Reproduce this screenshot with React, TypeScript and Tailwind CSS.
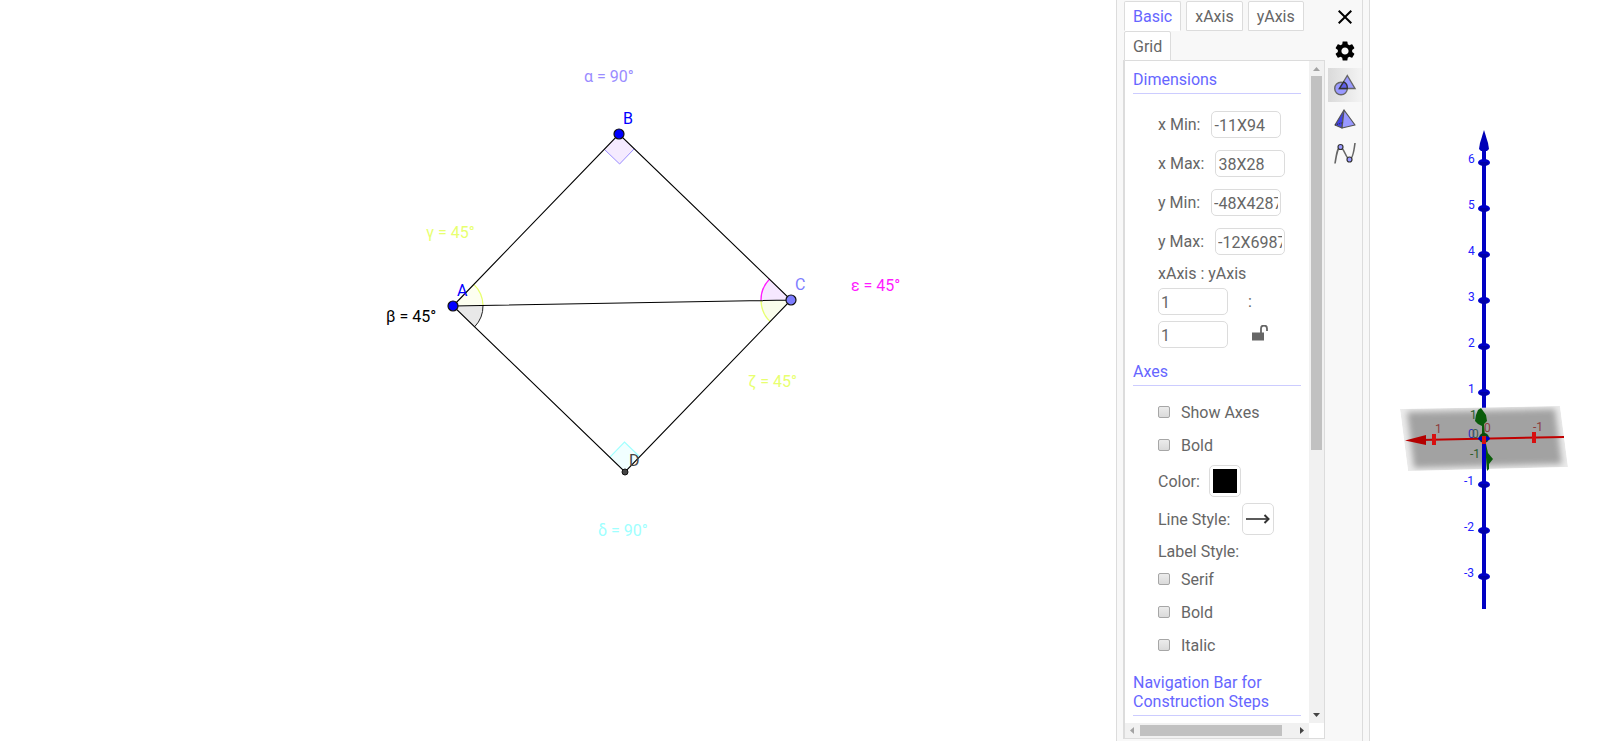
import React, { useState } from "react";
import { MdClose, MdSettings } from "react-icons/md";

const tabs = ["Basic", "xAxis", "yAxis", "Grid"];

const dimensions = [
  { id: "xmin", label: "x Min:", value: "-11X94" },
  { id: "xmax", label: "x Max:", value: "38X28" },
  { id: "ymin", label: "y Min:", value: "-48X4287" },
  { id: "ymax", label: "y Max:", value: "-12X6987" },
];

const inputClass =
  "h-[27px] w-[70px] rounded-[5px] border border-[#dcdcdc] bg-white px-0.5 pt-0.5 text-[#666] outline-none";

function Geometry() {
  return (
    <svg
      viewBox="0 0 1116 741"
      preserveAspectRatio="xMidYMin meet"
      className="block h-full w-full"
      fontSize="16"
      role="img"
      aria-label="Graphics"
    >
      <path d="M453 306 L483 305.5 A30 30 0 0 0 473.8 284.4 Z" fill="#fdfff0" />
      <path d="M483 305.5 A30 30 0 0 0 473.8 284.4" fill="none" stroke="#e8ff70" strokeWidth="1.3" />
      <path d="M453 306 L483 305.5 A30 30 0 0 1 474.6 326.8 Z" fill="#e8e8e8" />
      <path d="M483 305.5 A30 30 0 0 1 474.6 326.8" fill="none" stroke="#222" strokeWidth="1" />
      <path d="M791 300 L761 300.5 A30 30 0 0 1 769.4 279.2 Z" fill="#f6e8ff" />
      <path d="M761 300.5 A30 30 0 0 1 769.4 279.2" fill="none" stroke="#ff1aff" strokeWidth="1.3" />
      <path d="M791 300 L761 300.5 A30 30 0 0 0 770.2 321.6 Z" fill="#fafdec" />
      <path d="M761 300.5 A30 30 0 0 0 770.2 321.6" fill="none" stroke="#e8ff70" strokeWidth="1.3" />
      <path d="M619 134 L604.3 149.3 L619.6 164 L634.3 148.7 Z" fill="#f5ebff" />
      <path d="M604.3 149.3 L619.6 164 L634.3 148.7" fill="none" stroke="#9a8cff" />
      <path d="M625 472 L609.7 457.3 L624.5 442 L639.7 456.7 Z" fill="#f1ffff" />
      <path d="M609.7 457.3 L624.5 442 L639.7 456.7" fill="none" stroke="#a0ffff" strokeWidth="1.2" />

      <path d="M453 306 L619 134 L791 300 L625 472 Z M453 306 L791 300" fill="none" stroke="#000" strokeWidth="1.1" />

      <circle cx="453" cy="306" r="5" fill="#00f" stroke="#111" strokeWidth="1.2" />
      <circle cx="619" cy="134" r="5" fill="#00f" stroke="#111" strokeWidth="1.2" />
      <circle cx="791" cy="300" r="5" fill="#7d7dff" stroke="#111" strokeWidth="1.2" />
      <circle cx="625" cy="472" r="3" fill="#444" stroke="#111" />

      <text x="457" y="296" fill="#00f">A</text>
      <text x="623" y="124" fill="#00f">B</text>
      <text x="795" y="290" fill="#7d7dff">C</text>
      <text x="629" y="466" fill="#444">D</text>
      <text x="584" y="82" fill="#9a8cff">α = 90°</text>
      <text x="386" y="322" fill="#000">β = 45°</text>
      <text x="426" y="238" fill="#e8ff70">γ = 45°</text>
      <text x="851" y="291" fill="#ff1aff">ε = 45°</text>
      <text x="748" y="387" fill="#e8ff70">ζ = 45°</text>
      <text x="598" y="536" fill="#a0ffff">δ = 90°</text>
    </svg>
  );
}

const upper = [
  { y: 162, n: "6" },
  { y: 208, n: "5" },
  { y: 254, n: "4" },
  { y: 300, n: "3" },
  { y: 346, n: "2" },
  { y: 392, n: "1" },
];
const lower = [
  { y: 484, n: "-1" },
  { y: 530, n: "-2" },
  { y: 576, n: "-3" },
];

function Graphics3D() {
  return (
    <svg
      viewBox="0 0 230 741"
      preserveAspectRatio="xMidYMin meet"
      className="block h-full w-full"
      fontSize="12"
      role="img"
      aria-label="3D graphics"
    >
      <defs>
        <filter id="soft" x="-10%" y="-20%" width="120%" height="140%">
          <feGaussianBlur stdDeviation="3" />
        </filter>
        <clipPath id="plane">
          <path d="M30 409 L190 406 L198 467 L38 471 Z" />
        </clipPath>
      </defs>
      <path d="M114 148 V408" stroke="#0000c4" strokeWidth="4" />
      <path d="M114 130 L118 143 L119 149 L117 151 H111 L109 149 L110 143 Z" fill="#0000b8" />
      {upper.map((t) => (
        <g key={t.n}>
          <ellipse cx="114" cy={t.y + 0.5} rx="6" ry="3.6" fill="#0000c8" />
          <path d={`M110 ${t.y} h8 v2 l-3 2 h-2 l-3 -2 Z`} fill="#0000a8" />
          <text x="98" y={t.y + 1} fill="#2020ff">{t.n}</text>
        </g>
      ))}

      <g clipPath="url(#plane)">
        <path d="M30 409 L190 406 L198 467 L38 471 Z" fill="#ececec" />
        <path d="M37 412 L185 409 L192 464 L44 468 Z" fill="#a2a2a2" filter="url(#soft)" />
      </g>

      <path d="M115 444 L117 471 L119 469 L119 464 L123 459 L118 453 L116 444 Z" fill="#0a5c0a" />
      <path d="M114 444 V609" stroke="#0000c4" strokeWidth="4" />
      {lower.map((t) => (
        <g key={t.n}>
          <ellipse cx="114" cy={t.y + 0.5} rx="6" ry="3.6" fill="#0000c8" />
          <path d={`M110 ${t.y} h8 v2 l-3 2 h-2 l-3 -2 Z`} fill="#0000a8" />
          <text x="94" y={t.y + 1} fill="#2020ff">{t.n}</text>
        </g>
      ))}

      <path d="M111 408 L108 410 L106 415 L105 421 L108 424 L112 426 L112 436 H115 L114 424 L117 421 L116 415 Z" fill="#0a5c0a" />
      <path d="M50 440 L194 437" stroke="#c00000" strokeWidth="2" />
      <path d="M35 440.5 L56 435 V445 Z" fill="#b40000" />
      <rect x="62" y="434" width="4" height="11" fill="#d81010" />
      <rect x="162" y="432" width="4" height="11" fill="#d81010" />
      <circle cx="114" cy="438" r="5" fill="#0a4c0a" />
      <ellipse cx="114" cy="438.500" rx="6" ry="2.500" fill="#0000c8" />
      <rect x="112" y="436" width="4" height="8" fill="#d81010" />

      <text x="65" y="433" fill="#8c3c3c">1</text>
      <text x="163" y="431" fill="#8c3c3c">-1</text>
      <text x="114" y="432" fill="#8c3c3c">0</text>
      <text x="98" y="438" fill="#3030b8">0</text>
      <text x="102" y="438" fill="#3c5c4c">0</text>
      <text x="100" y="419" fill="#2c5c2c">1</text>
      <text x="100" y="458" fill="#2c5c2c">-1</text>
    </svg>
  );
}

function ShapesIcon() {
  return (
    <svg width="24" height="24" viewBox="0 0 24 24" stroke="#666" strokeWidth="1.4">
      <circle cx="8" cy="15.500" r="6.300" fill="#9999ff" />
      <path d="M14.300 2.500 L22 15.500 H6.500 Z" fill="#9999ff" />
      <path d="M10.600 8.800 C13 9.800 14.500 12.500 14.300 15.500 H6.500 Z" fill="#5f5fe8" stroke="#333" />
    </svg>
  );
}

function PyramidIcon() {
  return (
    <svg width="24" height="24" viewBox="0 0 24 24" stroke="#555" strokeWidth="1.2" strokeLinejoin="round">
      <path d="M11 3 L2 18 L9 21 Z" fill="#4242e6" />
      <path d="M11 3 L22 18 L9 21 Z" fill="#9999ff" />
      <path d="M2 18 L10 15.500" fill="none" stroke="#333" strokeDasharray="1 1" />
    </svg>
  );
}

function CurveIcon() {
  return (
    <svg width="24" height="24" viewBox="0 0 24 24" fill="none" stroke="#666" strokeWidth="1.6">
      <path d="M2 22.500 C3.500 13 4.500 6 7.500 6 C10.500 6 13.500 18.500 16.500 18.500 C19.500 18.500 21 10 22 2" />
      <circle cx="7.500" cy="6" r="2.500" fill="#9999ff" stroke="#333" strokeWidth="1.2" />
      <circle cx="16.500" cy="18.500" r="2.500" fill="#9999ff" stroke="#333" strokeWidth="1.2" />
    </svg>
  );
}

function Heading({ children }: { children: React.ReactNode }) {
  return <h2 className="border-b border-[#ccccff] pb-1 text-[#6666ff]">{children}</h2>;
}

function Check({ label }: { label: string }) {
  return (
    <label className="flex h-[33px] items-center gap-[11px]">
      <input
        type="checkbox"
        className="mb-0.5 size-3 appearance-none rounded-xs border border-[#a6a6a6] bg-linear-to-b from-[#ececec] to-[#dadada] checked:bg-[#6666ff]"
      />
      {label}
    </label>
  );
}

export default function App() {
  const [active, setActive] = useState("Basic");
  return (
    <div className="flex h-screen overflow-hidden bg-white font-['Roboto','Liberation_Sans',sans-serif] text-[16px] leading-[19px] text-[#666]">
      <main className="min-w-0 flex-1">
        <Geometry />
      </main>

      <aside className="flex shrink-0 border-x border-[#dcdcdc] bg-[#f8f8f8] pl-1.5">
        <div className="flex w-[202px] flex-col pb-0.5">
          <div role="tablist" className="z-10 -mb-px flex flex-wrap gap-x-[5px] pt-px pl-px">
            {tabs.map((t) => (
              <button
                key={t}
                role="tab"
                aria-selected={t === active}
                onClick={() => setActive(t)}
                className={
                  t === active
                    ? "rounded-t-xs border border-[#dcdcdc] border-b-white bg-white px-2 pt-[5px] pb-1 text-[#6666ff]"
                    : "rounded-t-xs border border-[#dcdcdc] bg-white px-2 pt-[5px] pb-1"
                }
              >
                {t}
              </button>
            ))}
          </div>

          <div className="grid min-h-0 flex-1 grid-cols-[1fr_15px] grid-rows-[1fr_15px] border border-l-2 border-[#dcdcdc] bg-white">
            <form className="min-h-0 overflow-hidden pt-[9px] pr-2 pl-2">
              <Heading>Dimensions</Heading>
              <div className="mt-[17px] flex flex-col gap-3 pl-[25px]">
                {dimensions.map((d) => (
                  <div key={d.id} className="flex items-center gap-[11px]">
                    <label htmlFor={d.id}>{d.label}</label>
                    <input id={d.id} defaultValue={d.value} className={inputClass} />
                  </div>
                ))}
              </div>
              <div className="mt-[9px] pl-[25px]">
                <label htmlFor="ratio-x">xAxis : yAxis</label>
                <div className="mt-[5px] flex items-center gap-5">
                  <input id="ratio-x" defaultValue="1" className={inputClass} />
                  <span>:</span>
                </div>
                <div className="mt-1.5 flex items-center gap-6">
                  <input aria-label="yAxis ratio" defaultValue="1" className={inputClass} />
                  <button type="button" aria-label="Lock ratio" className="mb-1">
                    <svg width="16" height="16" viewBox="0 0 16 16">
                      <rect x="0" y="7.500" width="12" height="8" fill="#666" />
                      <path d="M9 8 V3.500 A3 3 0 0 1 15 3.500 V6" fill="none" stroke="#666" strokeWidth="1.800" />
                    </svg>
                  </button>
                </div>
              </div>

              <div className="mt-3.5">
                <Heading>Axes</Heading>
              </div>
              <div className="mt-2.5 pl-[25px]">
                <Check label="Show Axes" />
                <Check label="Bold" />
                <div className="mt-[3px] flex items-center gap-[9px]">
                  Color:
                  <button
                    type="button"
                    aria-label="Axes color"
                    className="size-8 rounded-[5px] border border-[#dcdcdc] bg-white p-[3px]"
                  >
                    <span className="block size-6 bg-black" />
                  </button>
                </div>
                <div className="mt-1.5 flex items-center gap-3">
                  Line Style:
                  <button
                    type="button"
                    aria-label="Line style"
                    className="flex size-8 items-center justify-center rounded-[5px] border border-[#dcdcdc] bg-white"
                  >
                    <svg width="24" height="24" viewBox="0 0 24 24" fill="none" stroke="#333">
                      <path d="M0 12 H22" strokeWidth="1.600" />
                      <path d="M18.500 8 L22.500 12 L18.500 16" strokeWidth="2" />
                    </svg>
                  </button>
                </div>
                <div className="mt-[7px] mb-0.5">Label Style:</div>
                <Check label="Serif" />
                <Check label="Bold" />
                <Check label="Italic" />
              </div>
              <div className="mt-[11px]">
                <Heading>Navigation Bar for Construction Steps</Heading>
              </div>
            </form>

            <div className="flex flex-col items-center bg-[#f1f1f1]">
              <svg width="15" height="15" viewBox="0 0 15 15" className="shrink-0">
                <path d="M4 10 L7.500 6 L11 10 Z" fill="#a3a3a3" />
              </svg>
              <div className="h-[374px] w-[11px] bg-[#c1c1c1]" />
              <svg width="15" height="15" viewBox="0 0 15 15" className="mt-auto shrink-0">
                <path d="M4 5 L7.500 9 L11 5 Z" fill="#444" />
              </svg>
            </div>

            <div className="flex items-center bg-[#f1f1f1]">
              <svg width="15" height="15" viewBox="0 0 15 15" className="shrink-0">
                <path d="M9 4 L5 7.500 L9 11 Z" fill="#a3a3a3" />
              </svg>
              <div className="h-[11px] w-[142px] bg-[#c1c1c1]" />
              <svg width="15" height="15" viewBox="0 0 15 15" className="ml-auto shrink-0">
                <path d="M6 4 L10 7.500 L6 11 Z" fill="#444" />
              </svg>
            </div>
          </div>
        </div>

        <nav className="flex w-[38px] flex-col border-r border-[#dcdcdc] pl-[3px]">
          <button aria-label="Close" className="flex h-[34px] items-center justify-center text-black">
            <MdClose size={24} />
          </button>
          <button aria-label="Settings" className="flex h-[34px] items-center justify-center text-black">
            <MdSettings size={24} />
          </button>
          <button
            aria-label="Graphics settings"
            className="flex h-[34px] items-center justify-center bg-linear-to-r from-[#dadada] to-[#f4f4f4]"
          >
            <ShapesIcon />
          </button>
          <button aria-label="3D graphics settings" className="flex h-[34px] items-center justify-center">
            <PyramidIcon />
          </button>
          <button aria-label="Advanced settings" className="flex h-[34px] items-center justify-center">
            <CurveIcon />
          </button>
        </nav>
        <div className="w-1.5" />
      </aside>

      <section className="w-[230px] shrink-0">
        <Graphics3D />
      </section>
    </div>
  );
}
